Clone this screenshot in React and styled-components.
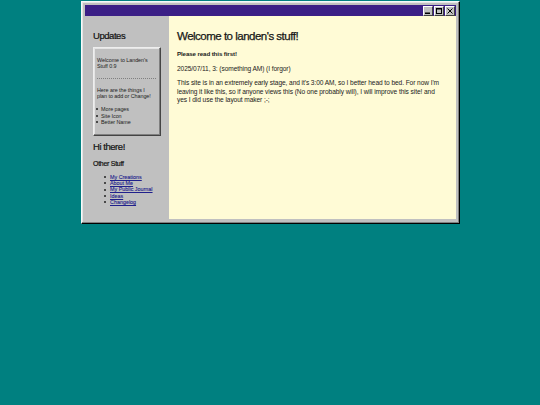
import React from "react";
import styled, { createGlobalStyle } from "styled-components";

const Global = createGlobalStyle`
  html, body { margin: 0; padding: 0; background: #008080; }
  body { font-family: "Liberation Sans", Arial, sans-serif; color: #111; height: 405px; overflow: hidden; }
`;

const Page = styled.div`
  display: flex;
  padding: 1px 0 0 81px;
`;

const Window = styled.div`
  box-sizing: border-box;
  width: 379px;
  height: 223px;
  background: #c0c0c0;
  border: 1px solid #f4fbfb;
  border-right-color: #000;
  border-bottom-color: #000;
  box-shadow: inset -1px -1px 0 #808080, inset 1px 1px 0 #e4e4e4;
  padding: 3px;
  display: flex;
  flex-direction: column;
`;

const TitleBar = styled.div`
  height: 11px;
  background: #3b1f86;
  display: flex;
  justify-content: flex-end;
  align-items: center;
  gap: 1px;
  padding-right: 1px;
  flex: none;
`;

const WinButton = styled.div`
  box-sizing: border-box;
  width: 10px;
  height: 10px;
  background: #c0c0c0;
  border: 1px solid #fff;
  border-right-color: #404040;
  border-bottom-color: #404040;
  display: flex;
  align-items: center;
  justify-content: center;
  svg { display: block; }
`;

const Body = styled.div`
  flex: 1;
  display: flex;
  min-height: 0;
  margin-bottom: 1px;
`;

const Sidebar = styled.aside`
  width: 84px;
  flex: none;
  background: #c0c0c0;
  box-sizing: border-box;
  padding: 14px 8px 0 8px;
`;

const SideTitle = styled.h2`
  margin: 0 0 5px;
  font-size: 9.5px;
  line-height: 12px;
  font-weight: 400;
  letter-spacing: -0.45px;
  -webkit-text-stroke: 0.2px #111;
`;

const UpdatesBox = styled.div`
  box-sizing: border-box;
  width: 68px;
  height: 89px;
  background: #c0c0c0;
  border: 1px solid;
  border-color: #eeeeee #444444 #444444 #eeeeee;
  box-shadow: inset -1px -1px 0 #808080, inset 1px 1px 0 #e4e4e4;
  padding: 9px 4px 0 3px;
  font-size: 5.4px;
  line-height: 6.4px;
  color: #222;
  letter-spacing: -0.05px;
`;

const BoxText = styled.p`
  margin: 0;
`;

const Rule = styled.hr`
  border: 0;
  border-top: 1px dotted #808080;
  margin: 8px 0 8px;
`;

const BulletList = styled.ul`
  list-style: none;
  margin: ${(p) => p.$top}px 0 0 ${(p) => p.$indent}px;
  padding: 0;
`;

const BulletItem = styled.li`
  display: flex;
  align-items: center;
  gap: ${(p) => p.$gap}px;
  &::before {
    content: "";
    flex: none;
    width: 2px;
    height: 2px;
    border-radius: 50%;
    background: #222;
  }
`;

const SubTitle = styled.h3`
  margin: 6px 0 0;
  font-size: 7px;
  line-height: 9px;
  font-weight: 400;
  letter-spacing: -0.28px;
  -webkit-text-stroke: 0.2px #111;
`;

const HiTitle = styled(SideTitle)`
  margin: 5px 0 0;
`;

const NavBlock = styled.nav`
  font-size: 5.4px;
  line-height: 6.2px;
`;

const NavLink = styled.a`
  color: #20208c;
  text-decoration: underline;
  text-decoration-thickness: 0.5px;
  -webkit-text-stroke: 0.1px #20208c;
`;

const Content = styled.main`
  flex: 1;
  background: #fffbd6;
  box-sizing: border-box;
  padding: 13px 8px 0 8px;
  color: #1a1a1a;
`;

const Heading = styled.h1`
  margin: 0;
  font-size: 11.5px;
  line-height: 15px;
  font-weight: 400;
  letter-spacing: -0.5px;
  -webkit-text-stroke: 0.25px #111;
`;

const Lead = styled.p`
  margin: 6px 0 0;
  font-size: 6.2px;
  line-height: 8px;
  font-weight: 700;
  letter-spacing: -0.12px;
`;

const Para = styled.p`
  margin: 6.5px 0 0;
  font-size: 6.6px;
  line-height: 8.5px;
  letter-spacing: -0.08px;
  max-width: 268px;
  & + & { margin-top: 6px; }
`;

const updates = ["More pages", "Site Icon", "Better Name"];
const links = ["My Creations", "About Me", "My Public Journal", "Ideas", "Changelog"];

export default function App() {
  return (
    <>
      <Global />
      <Page>
        <Window>
          <TitleBar>
            <WinButton>
              <svg width="6" height="6" viewBox="0 0 6 6"><rect x="0" y="4.5" width="5" height="1.5" fill="#000" /></svg>
            </WinButton>
            <WinButton>
              <svg width="6" height="6" viewBox="0 0 6 6"><rect x="0.5" y="0.5" width="5" height="5" fill="none" stroke="#000" /><rect x="0" y="0" width="6" height="1.5" fill="#000" /></svg>
            </WinButton>
            <WinButton>
              <svg width="6" height="6" viewBox="0 0 6 6"><path d="M0.5 0.5 L5.5 5.5 M5.5 0.5 L0.5 5.5" stroke="#000" strokeWidth="1" /></svg>
            </WinButton>
          </TitleBar>
          <Body>
            <Sidebar>
              <SideTitle>Updates</SideTitle>
              <UpdatesBox>
                <BoxText>Welcome to Landen's Stuff 0.9</BoxText>
                <Rule />
                <BoxText>Here are the things I plan to add or Change!</BoxText>
                <BulletList $top={6.5} $indent={-1}>
                  {updates.map((u) => <BulletItem key={u} $gap={3}>{u}</BulletItem>)}
                </BulletList>
              </UpdatesBox>
              <HiTitle>Hi there!</HiTitle>
              <SubTitle>Other Stuff</SubTitle>
              <NavBlock>
                <BulletList $top={6} $indent={11}>
                  {links.map((l) => <BulletItem key={l} $gap={4}><NavLink href="#">{l}</NavLink></BulletItem>)}
                </BulletList>
              </NavBlock>
            </Sidebar>
            <Content>
              <Heading>Welcome to landen's stuff!</Heading>
              <Lead>Please read this first!</Lead>
              <Para>2025/07/11, 3: (something AM) (I forgor)</Para>
              <Para>This site is in an extremely early stage, and it's 3:00 AM, so I better head to bed. For now I'm leaving it like this, so if anyone views this (No one probably will), I will improve this site! and yes I did use the layout maker ;-;</Para>
            </Content>
          </Body>
        </Window>
      </Page>
    </>
  );
}
